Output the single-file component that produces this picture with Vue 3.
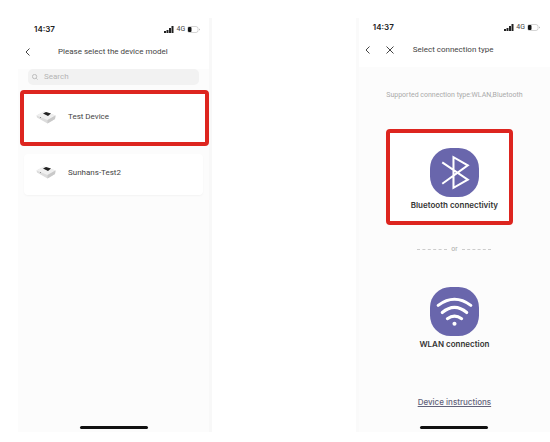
<script setup>
import { ref } from 'vue'

const search = ref('')

const devices = [
  { id: 1, name: 'Test Device', highlighted: true },
  { id: 2, name: 'Sunhans-Test2', highlighted: false }
]
</script>

<template>
  <main class="page">
    <section class="phone phone-models">
      <div class="status">
        <span class="time">14:37</span>
        <span class="indicators">
          <svg class="signal" viewBox="0 0 20 14">
            <path d="M0 10h4v4H0zM5 8h4v6H5zM10 4h4v10h-4zM15 0h4v14h-4z" />
          </svg>
          <span class="network">4G</span>
          <svg class="battery" viewBox="0 0 26 14">
            <rect x="1" y="1" width="21" height="12" rx="4" class="battery-shell" />
            <rect x="2" y="2" width="7" height="10" rx="2" />
            <path d="M24 5v4l2-2z" class="battery-tip" />
          </svg>
        </span>
      </div>
      <header class="nav">
        <button class="icon-btn" aria-label="Back">
          <svg class="nav-icon" viewBox="0 0 16 16"><path d="M11 1L4 8l7 7" /></svg>
        </button>
        <h1 class="title">Please select the device model</h1>
      </header>
      <label class="search">
        <svg class="search-icon" viewBox="0 0 14 14">
          <circle cx="6" cy="6" r="5" />
          <path d="M10 10l3 3" />
        </svg>
        <input v-model="search" type="text" placeholder="Search" aria-label="Search" />
      </label>
      <div class="devices">
        <button
          v-for="device in devices"
          :key="device.id"
          class="device"
          :class="{ highlighted: device.highlighted }"
        >
          <svg class="device-img" viewBox="0 0 42 26">
            <path d="M1 9L16 1l23 8-1 7-15 9L2 13z" fill="#dcdcdc" />
            <path d="M1 9L16 1l23 8-16 9z" fill="#efefef" />
            <path d="M23 18l16-9-1 7-15 9z" fill="#c9c9c9" />
            <path d="M14 5l6-3 10 3-6 5z" fill="#222" />
            <circle cx="9" cy="13" r="1" fill="#777" />
          </svg>
          <span>{{ device.name }}</span>
        </button>
      </div>
      <div class="home-bar"></div>
    </section>

    <section class="phone phone-connect">
      <div class="status">
        <span class="time">14:37</span>
        <span class="indicators">
          <svg class="signal" viewBox="0 0 20 14">
            <path d="M0 10h4v4H0zM5 8h4v6H5zM10 4h4v10h-4zM15 0h4v14h-4z" />
          </svg>
          <span class="network">4G</span>
          <svg class="battery" viewBox="0 0 26 14">
            <rect x="1" y="1" width="21" height="12" rx="4" class="battery-shell" />
            <rect x="2" y="2" width="7" height="10" rx="2" />
            <path d="M24 5v4l2-2z" class="battery-tip" />
          </svg>
        </span>
      </div>
      <header class="nav">
        <button class="icon-btn" aria-label="Back">
          <svg class="nav-icon" viewBox="0 0 16 16"><path d="M11 1L4 8l7 7" /></svg>
        </button>
        <button class="icon-btn" aria-label="Close">
          <svg class="nav-icon" viewBox="0 0 16 16"><path d="M1 1l14 14M15 1L1 15" /></svg>
        </button>
        <h1 class="title">Select connection type</h1>
      </header>
      <p class="supported">Supported connection type:WLAN,Bluetooth</p>
      <button class="connection highlighted">
        <svg class="connection-icon" viewBox="0 0 48 48">
          <rect width="48" height="48" rx="20" fill="#6966ac" />
          <path d="M12 14l25 17-14 8V9l14 8-25 18" />
        </svg>
        <span>Bluetooth connectivity</span>
      </button>
      <div class="divider"><span>or</span></div>
      <button class="connection">
        <svg class="connection-icon wifi" viewBox="0 0 48 48">
          <rect width="48" height="48" rx="20" fill="#6966ac" />
          <path d="M8 18q16-12 32 0M12 25q12-10 24 0M17 31q7-5 14 0" />
          <circle cx="24" cy="36" r="2" fill="#fff" />
        </svg>
        <span>WLAN connection</span>
      </button>
      <a class="instructions" href="#">Device instructions</a>
      <div class="home-bar"></div>
    </section>
  </main>
</template>

<style>
body {
  margin: 0;
  background: #fff;
}
</style>

<style scoped>
.page {
  display: grid;
  grid-template-columns: 193fr 193fr;
  gap: 27%;
  box-sizing: border-box;
  min-height: 100vh;
  padding: 18px 0 10px 18px;
  font-family: Roboto, "Liberation Sans", sans-serif;
  font-size: 8px;
  line-height: 12px;
  color: #444;
}

button {
  margin: 0;
  padding: 0;
  border: 0;
  background: none;
  font: inherit;
  color: inherit;
  cursor: pointer;
}

svg {
  display: block;
  flex: none;
}

.phone {
  display: flex;
  flex-direction: column;
  box-sizing: border-box;
  min-width: 0;
  background: #fcfcfc;
}

.phone-models {
  border-right: 3px solid #f8f8f8;
}

.phone-connect {
  border-left: 3px solid #fafafa;
}

.status {
  display: flex;
  align-items: center;
  justify-content: space-between;
  padding: 5px 9px 0 16px;
  background: #fff;
}

.phone-connect .status {
  padding: 3px 10px 0 14px;
}

.time {
  font-family: Inter, sans-serif;
  font-weight: 600;
  color: #222;
}

.indicators {
  display: flex;
  align-items: center;
  gap: 2px;
}

.signal {
  width: 10px;
  height: 7px;
  fill: #222;
}

.network {
  font-size: 7px;
  color: #444;
}

.battery {
  width: 13px;
  height: 7px;
  fill: #111;
}

.battery-shell {
  fill: #fff;
  stroke: #aaa;
  stroke-width: 1;
}

.battery-tip {
  fill: #aaa;
}

.nav {
  display: flex;
  align-items: center;
  height: 34px;
  padding-left: 6px;
  background: #fff;
}

.phone-connect .nav {
  gap: 14px;
  padding-left: 5px;
}

.icon-btn {
  width: 8px;
  height: 8px;
}

.nav-icon {
  width: 8px;
  height: 8px;
  fill: none;
  stroke: #444;
  stroke-width: 2;
}

.title {
  margin: 0 0 0 26px;
  font-size: 8px;
  font-weight: 400;
  white-space: nowrap;
}

.phone-connect .title {
  margin-left: 5px;
}

.search {
  display: flex;
  align-items: center;
  gap: 6px;
  height: 16px;
  margin: 0 10px;
  padding-left: 4px;
  border-radius: 5px;
  background: #f2f2f2;
}

.search-icon {
  width: 6px;
  height: 6px;
  fill: none;
  stroke: #b5b5b5;
  stroke-width: 2;
}

.search input {
  flex: 1;
  min-width: 0;
  padding: 0;
  border: 0;
  outline: 0;
  background: none;
  font: inherit;
}

.search input::placeholder {
  color: #b5b5b5;
  opacity: 1;
}

.devices {
  display: flex;
  flex-direction: column;
  gap: 8px;
  padding: 5px 0 0 2px;
}

.device {
  display: flex;
  align-items: center;
  gap: 11px;
  box-sizing: border-box;
  height: 41px;
  margin: 0 6px 0 4px;
  padding: 0 0 4px 12px;
  border-radius: 4px;
  background: #fff;
  box-shadow: 0 1px 2px rgba(0, 0, 0, 0.04);
}

.highlighted {
  border: 4px solid #dd251f;
  border-radius: 4px;
  background: #fff;
}

.device.highlighted {
  height: 56px;
  margin: 0;
  padding-bottom: 2px;
  box-shadow: none;
}

.device-img {
  width: 21px;
  height: 13px;
}

.supported {
  margin: 22px 0 0;
  font-size: 7px;
  text-align: center;
  white-space: nowrap;
  color: #aaa;
}

.connection {
  display: flex;
  flex-direction: column;
  align-items: center;
  align-self: center;
  gap: 2px;
  box-sizing: border-box;
  width: 127px;
  font-family: Inter, sans-serif;
  font-weight: 600;
  white-space: nowrap;
  color: #333;
}

.connection.highlighted {
  margin: 28px 10px 0 0;
  padding: 15px 0 10px 10px;
}

.connection-icon {
  width: 49px;
  height: 49px;
  fill: none;
}

.connection-icon path {
  stroke: #fff;
  stroke-width: 2;
}

.connection-icon.wifi path {
  stroke-width: 3;
  stroke-linecap: round;
}

.divider {
  display: flex;
  align-items: center;
  align-self: center;
  gap: 4px;
  width: 74px;
  margin: 18px 0 32px;
  font-size: 7px;
  color: #aaa;
}

.divider::before,
.divider::after {
  content: '';
  flex: 1;
  border-top: 1px dashed #ccc;
}

.instructions {
  align-self: center;
  margin-top: 46px;
  font-family: Inter, sans-serif;
  font-weight: 500;
  color: #62627a;
}

.home-bar {
  align-self: center;
  width: 68px;
  height: 3px;
  margin: auto 0 3px;
  border-radius: 2px;
  background: #111;
}
</style>
